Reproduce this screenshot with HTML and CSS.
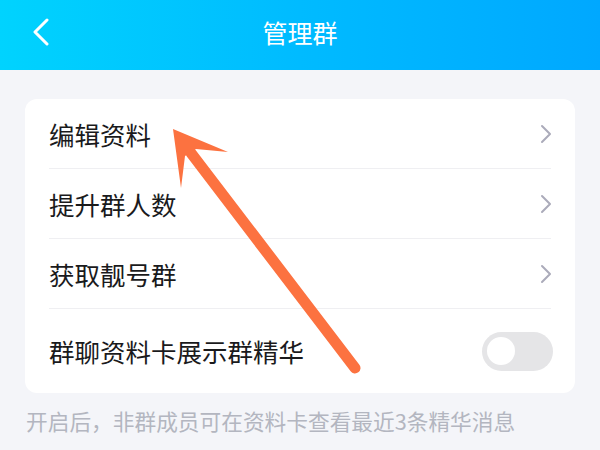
FILE: index.html
```html
<!DOCTYPE html>
<html lang="zh-CN">
<head>
    <meta charset="UTF-8">
    <meta name="viewport" content="width=device-width, initial-scale=1.0">
    <title>管理群</title>
    <link rel="stylesheet" href="styles.css">
</head>
<body>
    <div class="page">

        <div class="nav-bar">
            <a class="nav-back" href="#">
                <svg width="16" height="28" viewBox="0 0 16 28">
                    <path d="M14 2 L2 14 L14 26" fill="none" stroke="#fff" stroke-width="3" stroke-linecap="round" stroke-linejoin="round"/>
                </svg>
            </a>
            <h1 class="nav-title">管理群</h1>
            <span></span>
        </div>

        <div class="content">
            <div class="settings-card">
                <div class="settings-row">
                    <span class="row-label">编辑资料</span>
                    <svg class="row-arrow" width="12" height="20" viewBox="0 0 12 20">
                        <path d="M2 2 L10 10 L2 18" fill="none" stroke="#ABABBA" stroke-width="2" stroke-linecap="round" stroke-linejoin="round"/>
                    </svg>
                </div>
                <div class="settings-row">
                    <span class="row-label">提升群人数</span>
                    <svg class="row-arrow" width="12" height="20" viewBox="0 0 12 20">
                        <path d="M2 2 L10 10 L2 18" fill="none" stroke="#ABABBA" stroke-width="2" stroke-linecap="round" stroke-linejoin="round"/>
                    </svg>
                </div>
                <div class="settings-row">
                    <span class="row-label">获取靓号群</span>
                    <svg class="row-arrow" width="12" height="20" viewBox="0 0 12 20">
                        <path d="M2 2 L10 10 L2 18" fill="none" stroke="#ABABBA" stroke-width="2" stroke-linecap="round" stroke-linejoin="round"/>
                    </svg>
                </div>
                <div class="settings-row settings-row-last">
                    <span class="row-label">群聊资料卡展示群精华</span>
                    <div class="switch">
                        <span class="switch-knob"></span>
                    </div>
                </div>
            </div>
            <p class="settings-hint">开启后，非群成员可在资料卡查看最近3条精华消息</p>
        </div>

        <svg class="annotation-arrow" width="600" height="450" viewBox="0 0 600 450">
            <line x1="191" y1="153" x2="355" y2="368" stroke="#FC7240" stroke-width="11" stroke-linecap="round"/>
            <polygon points="173,129 228,152 196,149 185,156 181,188" fill="#FC7240"/>
        </svg>
    </div>
</body>
</html>
```

FILE: styles.css
```css
* {
    margin: 0;
    padding: 0;
    box-sizing: border-box;
    font-family: "Noto Sans CJK SC", "Noto Sans", sans-serif;
}

body {
    background: #F4F5F9;
    color: #1A1A1C;
}

.page {
    position: relative;
    min-height: 450px;
}

.nav-bar {
    height: 70px;
    padding-bottom: 6px;
    display: grid;
    grid-template-columns: 1fr auto 1fr;
    align-items: center;
    background: linear-gradient(90deg, #00D3FE 0%, #00BBFF 50%, #00A8FF 100%);
}

.nav-back {
    display: flex;
    align-items: center;
    padding-left: 33px;
}

.nav-title {
    font-size: 25px;
    font-weight: 400;
    color: #fff;
    line-height: 1;
}

.content {
    padding: 29px 25px 0;
}

.settings-card {
    background: #fff;
    border-radius: 12px;
}

.settings-row {
    height: 70px;
    margin: 0 24px;
    display: flex;
    align-items: center;
    justify-content: space-between;
    border-bottom: 1px solid #EFEFF2;
}

.settings-row-last {
    height: 84px;
    border-bottom: none;
}

.row-label {
    font-size: 25.5px;
    line-height: 1;
}

.row-arrow {
    margin-right: -1px;
}

.switch {
    width: 71px;
    height: 39px;
    margin-right: -2px;
    padding: 0 5px;
    border-radius: 20px;
    background: #E5E5E7;
    display: flex;
    align-items: center;
}

.switch-knob {
    width: 28px;
    height: 28px;
    border-radius: 50%;
    background: #fff;
}

.settings-hint {
    margin-top: 13px;
    padding-left: 1px;
    font-size: 21.7px;
    line-height: 1.35;
    color: #B3B6C0;
}

.annotation-arrow {
    position: absolute;
    top: 0;
    left: 0;
    pointer-events: none;
}
```
